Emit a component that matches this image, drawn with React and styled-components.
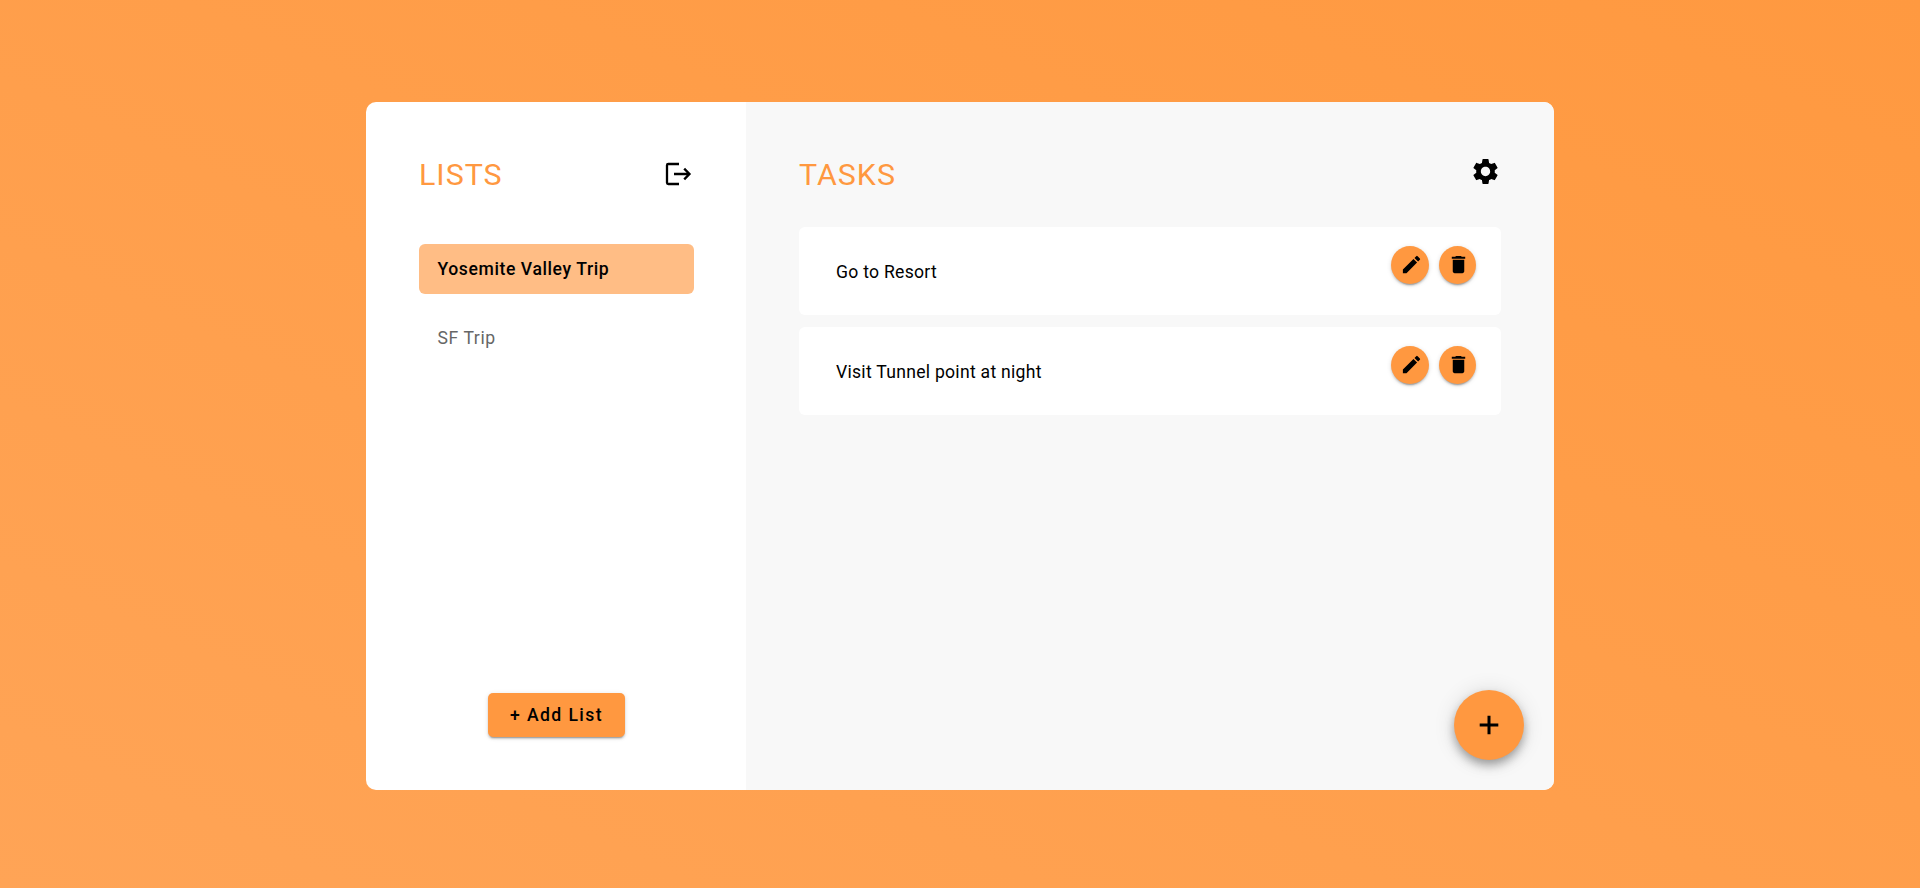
import React from "react";
import styled, { createGlobalStyle } from "styled-components";
import { MdEdit, MdDelete, MdSettings } from "react-icons/md";

const accent = "#ff9840";
const raised =
  "0 3px 1px -2px rgba(0,0,0,.2), 0 2px 2px 0 rgba(0,0,0,.14), 0 1px 5px 0 rgba(0,0,0,.12)";
const floating =
  "0 5px 8px -1px rgba(0,0,0,.22), 0 6px 12px 0 rgba(0,0,0,.15), 0 1px 22px 0 rgba(0,0,0,.12)";

const GlobalStyle = createGlobalStyle`
  * { box-sizing: border-box; }
  body { margin: 0; font-family: Roboto, "Liberation Sans", sans-serif; color: #000; }
  button { font: inherit; color: inherit; border: 0; padding: 0; cursor: pointer; background: none; }
`;

const Page = styled.div`
  height: 100vh;
  min-height: 888px;
  padding-top: 102px;
  display: flex;
  justify-content: center;
  align-items: flex-start;
  background: linear-gradient(to top right, #ffa456, #ff9940);
`;

const Card = styled.div`
  display: flex;
  width: 1188px;
  height: 688px;
  border-radius: 10px;
  overflow: hidden;
  background: #fff;
`;

const Sidebar = styled.aside`
  width: 380px;
  padding: 53px 52px 53px 53px;
  display: flex;
  flex-direction: column;
`;

const Main = styled.main`
  flex: 1;
  position: relative;
  padding: 53px;
  background: #f8f8f8;
`;

const Header = styled.header`
  display: flex;
  justify-content: space-between;
  align-items: flex-start;
  height: ${(p) => p.$height}px;
`;

const Title = styled.h1`
  margin: 0;
  font-size: 30.4px;
  line-height: 40px;
  font-weight: 400;
  letter-spacing: 1px;
  color: ${accent};
`;

const HeaderButton = styled.button`
  display: flex;
  margin-top: ${(p) => p.$top}px;
  margin-right: ${(p) => p.$right || 0}px;
`;

const ListItem = styled.div`
  height: 50px;
  margin-bottom: 19px;
  padding-left: 18.5px;
  border-radius: 6px;
  line-height: 50px;
  font-size: 17.6px;
  letter-spacing: 0.58px;
  font-weight: ${(p) => (p.$active ? 500 : 400)};
  color: ${(p) => (p.$active ? "#000" : "#666")};
  background: ${(p) => (p.$active ? "#ffbd85" : "transparent")};
`;

const AddListButton = styled.button`
  margin-top: auto;
  align-self: center;
  width: 137px;
  height: 44px;
  padding-bottom: 1px;
  border-radius: 5px;
  background: ${accent};
  font-size: 17.6px;
  font-weight: 500;
  letter-spacing: 1.4px;
  box-shadow: ${raised};
`;

const Task = styled.div`
  display: flex;
  justify-content: space-between;
  height: 88px;
  margin-bottom: 12px;
  padding: 19px 25px 0 37px;
  border-radius: 6px;
  background: #fff;
`;

const TaskText = styled.span`
  font-size: 17.6px;
  line-height: 52px;
  letter-spacing: 0.27px;
`;

const Actions = styled.div`
  display: flex;
  gap: 10px;
`;

const RoundButton = styled.button`
  display: flex;
  align-items: center;
  justify-content: center;
  width: ${(p) => p.$width}px;
  height: 38px;
  padding: 0 0 1px 2px;
  border-radius: 50%;
  background: ${accent};
  box-shadow: ${raised};
`;

const Fab = styled.button`
  position: absolute;
  right: 30px;
  bottom: 30px;
  width: 70px;
  height: 70px;
  display: flex;
  align-items: center;
  justify-content: center;
  border-radius: 50%;
  background: ${accent};
  box-shadow: ${floating};
`;

const LogoutIcon = () => (
  <svg width="30" height="30" viewBox="0 0 30 30" fill="none" stroke="#000" strokeWidth="2.3">
    <path d="M17 5H6.3Q5 5 5 6.3V23.7Q5 25 6.3 25H17" />
    <path d="M12 15H27.5M22.2 9.6L27.5 15L22.2 20.4" />
  </svg>
);

const PlusIcon = () => (
  <svg width="20" height="20" viewBox="0 0 20 20" fill="none" stroke="#000" strokeWidth="3">
    <path d="M10 .7V19.3M.7 10H19.3" />
  </svg>
);

const lists = [
  { name: "Yosemite Valley Trip", active: true },
  { name: "SF Trip", active: false },
];
const tasks = ["Go to Resort", "Visit Tunnel point at night"];

export default function App() {
  return (
    <>
      <GlobalStyle />
      <Page>
        <Card>
          <Sidebar>
            <Header $height={89}>
              <Title>LISTS</Title>
              <HeaderButton $top={4} $right={2} aria-label="Log out"><LogoutIcon /></HeaderButton>
            </Header>
            {lists.map((l) => (
              <ListItem key={l.name} $active={l.active}>{l.name}</ListItem>
            ))}
            <AddListButton>+ Add List</AddListButton>
          </Sidebar>
          <Main>
            <Header $height={72}>
              <Title>TASKS</Title>
              <HeaderButton $top={1} aria-label="Settings"><MdSettings size={31} /></HeaderButton>
            </Header>
            {tasks.map((t) => (
              <Task key={t}>
                <TaskText>{t}</TaskText>
                <Actions>
                  <RoundButton $width={38} aria-label="Edit"><MdEdit size={23} /></RoundButton>
                  <RoundButton $width={37} aria-label="Delete"><MdDelete size={23} /></RoundButton>
                </Actions>
              </Task>
            ))}
            <Fab aria-label="Add task"><PlusIcon /></Fab>
          </Main>
        </Card>
      </Page>
    </>
  );
}
